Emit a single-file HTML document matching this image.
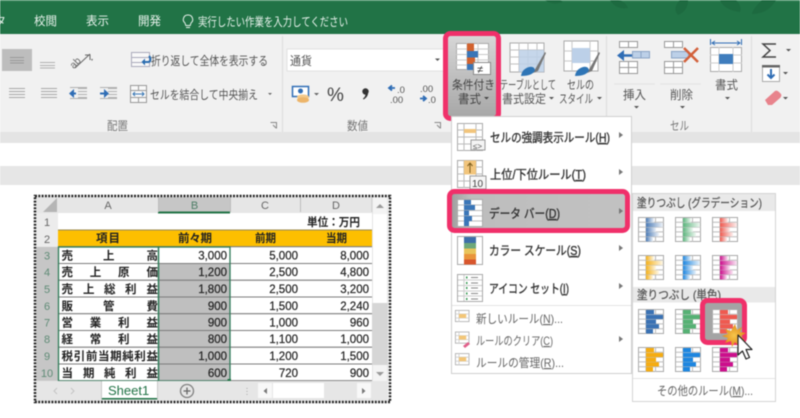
<!DOCTYPE html>
<html lang="ja"><head><meta charset="utf-8">
<style>
html,body{margin:0;padding:0;background:#fff;width:800px;height:418px;overflow:hidden}
svg{display:block;filter:blur(.4px)}
text{font-family:"Liberation Sans","Noto Sans CJK JP",sans-serif;fill:#444;font-size:12px}
.tab{fill:#e8f2ec;font-size:12px}
.rb{fill:#555;font-size:12px}
.gl{fill:#777;font-size:12px}
.m{fill:#333;font-size:12.5px;stroke:#333;stroke-width:.35}
.md{fill:#666;font-size:12px}
.c{fill:#222;font-size:11.5px;font-weight:bold}
.n{fill:#222;font-size:11.5px;text-anchor:end;stroke:#222;stroke-width:.2}
.h{fill:#666;font-size:11px;text-anchor:middle}
.rn{fill:#666;font-size:11px;text-anchor:middle}
.rs{fill:#5f8b76;font-size:11px;text-anchor:middle}
.sh{fill:#555;font-size:12px;stroke:#555;stroke-width:.25}
</style></head><body>
<svg width="800" height="418" viewBox="0 0 800 418" xmlns="http://www.w3.org/2000/svg">
<defs>
<linearGradient id="hl" x1="0" y1="0" x2="0" y2="1"><stop offset="0" stop-color="#d8d8d8"/><stop offset="1" stop-color="#a6a6a6"/></linearGradient>
<linearGradient id="hb" x1="0" y1="0" x2="1" y2="0"><stop offset="0" stop-color="#9c9c9c"/><stop offset=".12" stop-color="#bdbdbd"/><stop offset="1" stop-color="#c2c2c2"/></linearGradient>
<linearGradient id="g1"><stop offset="0" stop-color="#4a7ab5"/><stop offset="1" stop-color="#eef3f9"/></linearGradient>
<linearGradient id="g2"><stop offset="0" stop-color="#5cb57d"/><stop offset="1" stop-color="#eef8f1"/></linearGradient>
<linearGradient id="g3"><stop offset="0" stop-color="#ef5a50"/><stop offset="1" stop-color="#fdeeed"/></linearGradient>
<linearGradient id="g4"><stop offset="0" stop-color="#f5b21c"/><stop offset="1" stop-color="#fef8e8"/></linearGradient>
<linearGradient id="g5"><stop offset="0" stop-color="#1d86e0"/><stop offset="1" stop-color="#e8f3fc"/></linearGradient>
<linearGradient id="g6"><stop offset="0" stop-color="#cc0f8c"/><stop offset="1" stop-color="#fbe8f5"/></linearGradient>
<radialGradient id="sp"><stop offset="0" stop-color="#f7c64c"/><stop offset="1" stop-color="#e08a18"/></radialGradient>
<g id="grid">
<rect x=".5" y=".5" width="25" height="24" fill="#fff" stroke="#aaa"/>
<path d="M.5 5.3H26M.5 10.1H26M.5 14.9H26M.5 19.7H26M8 .5V25M17.500 .5V25" stroke="#bbb" stroke-width="1" fill="none"/>
</g>
<g id="bars">
<rect x="8" y="1" width="8" height="4.300"/><rect x="8" y="5.800" width="17" height="4.300"/><rect x="8" y="10.600" width="10" height="4.300"/><rect x="8" y="15.200" width="13" height="4.300"/><rect x="8" y="20" width="7" height="4.500"/>
</g>
<g id="mi">
<rect x=".5" y=".5" width="17" height="14" fill="#fff" stroke="#aaa"/>
<path d="M.5 5H18M.5 10H18M5 .5V15" stroke="#ccc" fill="none"/>
<rect x="5" y="5" width="9" height="5" fill="#f3c677"/>
</g>
<g id="lines3"><path d="M0 .5H16M0 3.500H16M0 6.500H16M0 9.500H16" stroke="#a8a8a8" stroke-width="1" fill="none"/></g>
<g id="mgrid">
<rect x=".5" y=".5" width="25" height="27" fill="#fff" stroke="#aaa"/>
<path d="M.5 7H26M.5 14H26M.5 21H26M7 .5V28M19 .5V28" stroke="#bbb" fill="none"/>
</g>
</defs>

<!-- title bar -->
<rect width="800" height="34" fill="#217346"/>
<rect width="800" height="1.500" fill="#3f8a60"/>
<g fill="#1d6a40">
<path d="M545 0q8 6 18 2l-3-2zM610 0q6 10 18 8q-3-7-10-8zM680 0q-8 8-2 15q10-4 10-15zM720 0q4 10 20 12q2-6-4-12zM762 0q-10 10-10 14q16 0 24-14z"/>
</g>
<text class="tab" x="-6" y="25">タ</text>
<text class="tab" x="34" y="25" textLength="23" lengthAdjust="spacingAndGlyphs">校閲</text>
<text class="tab" x="86" y="25" textLength="23" lengthAdjust="spacingAndGlyphs">表示</text>
<text class="tab" x="138" y="25" textLength="23" lengthAdjust="spacingAndGlyphs">開発</text>
<path d="M188 15a4.500 4.500 0 0 1 3 8l-.8 2.500h-4.400l-.8-2.500a4.500 4.500 0 0 1 3-8zM186 27.500h4" fill="none" stroke="#e8f2ec" stroke-width="1"/>
<text class="tab" x="198" y="26" textLength="150" lengthAdjust="spacingAndGlyphs">実行したい作業を入力してください</text>

<!-- ribbon -->
<rect y="34" width="800" height="98" fill="#f1f1f1"/>
<rect y="132" width="800" height="11" fill="#e4e4e4"/>
<rect y="143" width="800" height="23" fill="#fff"/>
<rect y="166" width="800" height="19" fill="#e6e6e6"/>
<path d="M282.500 36V132M606.500 36V132M751.500 36V132" stroke="#dcdcdc"/>

<!-- alignment group -->
<rect x="2" y="49" width="30" height="22" fill="#bdbdbd"/>
<path d="M10 57.500H24M10 60.500H24M10 63H24" stroke="#999"/>
<path d="M40 62.500H55M40 65.500H55M40 68H55" stroke="#b0b0b0"/>
<text x="69" y="66" transform="rotate(-45 75 62)" style="font-size:10px;fill:#666">ab</text>
<path d="M75 68L90 54M85 55h5v5" stroke="#666" fill="none"/>
<path d="M91 59l2 0l-1 2z" fill="#666"/>
<rect x="131.500" y="52.500" width="18" height="14" fill="#f8f8f8" stroke="#aab"/>
<path d="M132 57.500H149M132 62.500H142" stroke="#aab"/>
<path d="M149 56c2 2 2 6-1 6h-4" stroke="#2b6db0" stroke-width="2" fill="none"/><path d="M145 58.500l-3.500 3.500l3.500 3.500z" fill="#2b6db0"/>
<text class="rb" x="151" y="65" textLength="117" lengthAdjust="spacingAndGlyphs">折り返して全体を表示する</text>
<use href="#lines3" x="9" y="88"/>
<use href="#lines3" x="41" y="88"/>
<path d="M78 88.500H87M78 91.500H87M78 94.500H87M78 97.500H87M70 87.500H87M70 98.500H87" stroke="#b0b0b0"/>
<path d="M70 93.500h3.500M76 93.500H72" stroke="#2f6db5" stroke-width="2"/><path d="M74 89v9l-5-4.500z" fill="#2f6db5"/>
<path d="M108 88.500H117M108 91.500H117M108 94.500H117M108 97.500H117M100 87.500H117M100 98.500H117" stroke="#b0b0b0"/>
<path d="M100 93.500H105" stroke="#2f6db5" stroke-width="2"/><path d="M104 89v9l5-4.500z" fill="#2f6db5"/>
<rect x="130.500" y="85.500" width="16" height="17" fill="#f8f8f8" stroke="#999"/>
<path d="M130.500 90.500H146M130.500 97.500H146M138.500 85.500V90M138.500 98V102" stroke="#999"/>
<path d="M133 94H144M135 92l-2 2 2 2M142 92l2 2-2 2" stroke="#3a78b5" fill="none"/>
<text class="rb" x="150" y="99" textLength="108" lengthAdjust="spacingAndGlyphs">セルを結合して中央揃え</text>
<path d="M268 93h4l-2 2z" fill="#666"/>
<text class="gl" x="107" y="130" textLength="21" lengthAdjust="spacingAndGlyphs">配置</text>
<path d="M270.500 122.500h6v6M273 125l3 3" stroke="#888" fill="none"/>

<!-- number group -->
<rect x="287" y="49" width="157" height="22" fill="#fff" stroke="#e2e2e2"/>
<text class="rb" x="290" y="65" textLength="22" lengthAdjust="spacingAndGlyphs">通貨</text>
<path d="M435 58.500h5l-2.500 2.500z" fill="#555"/>
<rect x="292.500" y="86.500" width="16" height="10" fill="#fff" stroke="#2f6db5" stroke-width="1.500"/>
<circle cx="300.500" cy="91" r="2.500" fill="#2f6db5"/>
<ellipse cx="303" cy="97" rx="6" ry="2.500" fill="#f3c98b"/><ellipse cx="303" cy="100" rx="6" ry="2.800" fill="#edb56a"/>
<path d="M314 93h5l-2.500 2.500z" fill="#666"/>
<text x="327" y="101" style="font-size:19px;fill:#444">%</text>
<circle cx="365.500" cy="91.500" r="3.200" fill="#333"/>
<path d="M368 92c.5 3-1.500 6-4.500 7.500l-.5-1c1.500-1 2.500-2.500 2.500-4.500z" fill="#333"/>
<path d="M389 88h6M392 85.500l-3 2.500 3 2.500" stroke="#2f6db5" stroke-width="1.800" fill="none"/>
<text x="397" y="93" style="font-size:9.500px;fill:#555">.0</text>
<text x="390" y="103" style="font-size:9.500px;fill:#555">.00</text>
<text x="420" y="92" style="font-size:9.500px;fill:#555">.00</text>
<path d="M420 98.500h6M423 96l3 2.500-3 2.500" stroke="#2f6db5" stroke-width="1.800" fill="none"/>
<text x="428" y="103" style="font-size:9.500px;fill:#555">.0</text>
<text class="gl" x="347" y="130" textLength="21" lengthAdjust="spacingAndGlyphs">数値</text>
<path d="M434.500 122.500h6v6M437 125l3 3" stroke="#888" fill="none"/>

<!-- table format -->
<rect x="510" y="43" width="34" height="29" fill="#fff" stroke="#aaa"/>
<path d="M510 50H544M510 57H544M510 64H544M519 43V72M528 43V72M537 43V72" stroke="#c0c0c0"/>
<rect x="519" y="50" width="25" height="22" fill="#bcd0e8" opacity=".85"/>
<path d="M533 73L545 52l1 1-8 18z" fill="#777"/>
<path d="M521 76q1-7 8-9q5-1 6 3q-2 6-14 6z" fill="#2e75b6"/>
<text class="rb" x="500" y="89" textLength="56" lengthAdjust="spacingAndGlyphs">テーブルとして</text>
<text class="rb" x="502" y="103" textLength="44" lengthAdjust="spacingAndGlyphs">書式設定</text>
<path d="M549 97h5l-2.500 2.500z" fill="#555"/>
<!-- cell styles -->
<rect x="564" y="41" width="34" height="30" fill="#fff" stroke="#aaa"/>
<path d="M564 51H598M564 61H598M572 41V71M590 41V71" stroke="#c8c8c8"/>
<rect x="572" y="48" width="18" height="15" fill="#bcd0e8"/>
<path d="M587 73L599 52l1 1-8 18z" fill="#777"/>
<path d="M575 76q1-7 8-9q5-1 6 3q-2 6-14 6z" fill="#2e75b6"/>
<text class="rb" x="567" y="89" textLength="27" lengthAdjust="spacingAndGlyphs">セルの</text>
<text class="rb" x="559" y="103" textLength="34" lengthAdjust="spacingAndGlyphs">スタイル</text>
<path d="M597 97h5l-2.500 2.500z" fill="#555"/>

<!-- cells group -->
<rect x="619.500" y="41.500" width="18" height="6" fill="#fff" stroke="#999"/>
<path d="M628.500 41.500v6" stroke="#999"/>
<rect x="632.500" y="51.500" width="17" height="6.500" fill="#bcd0e8" stroke="#8aa4c4"/>
<path d="M641 51.500v7" stroke="#8aa4c4"/>
<path d="M620 55.500H632" stroke="#2f6db5" stroke-width="2.500"/><path d="M624 50l-7 5.500 7 5.500z" fill="#2f6db5"/>
<rect x="619.500" y="61.500" width="18" height="12" fill="#fff" stroke="#999"/>
<path d="M619.500 67.500H637M628.500 61.500V74" stroke="#999"/>
<path d="M614 84H655" stroke="#e2e2e2"/>
<text class="rb" x="623" y="99" textLength="23" lengthAdjust="spacingAndGlyphs">挿入</text>
<path d="M634 106h5l-2.500 2.500z" fill="#555"/>
<rect x="664.500" y="41.500" width="18" height="6" fill="#fff" stroke="#999"/>
<path d="M673.500 41.500v6" stroke="#999"/>
<rect x="671.500" y="51.500" width="17" height="6.500" fill="#bcd0e8" stroke="#8aa4c4"/>
<path d="M684 48L698 62M698 48L684 62" stroke="#d2603a" stroke-width="2.500"/>
<rect x="664.500" y="61.500" width="18" height="12" fill="#fff" stroke="#999"/>
<path d="M664.500 67.500H682M673.500 61.500V74" stroke="#999"/>
<path d="M660 84H701" stroke="#e2e2e2"/>
<text class="rb" x="670" y="99" textLength="23" lengthAdjust="spacingAndGlyphs">削除</text>
<path d="M680 106h5l-2.500 2.500z" fill="#555"/>
<path d="M712 43H740M715 41l-3 2 3 2M737 41l3 2-3 2M710.500 39v6M741.500 39v6" stroke="#2f6db5" fill="none"/>
<rect x="710.500" y="47.500" width="31" height="24" fill="#fff" stroke="#aaa"/>
<path d="M710 55H742M710 63H742M719 47V72M733 47V72" stroke="#ccc"/>
<rect x="719" y="54" width="14" height="10" fill="#3f7dbd"/>
<text class="rb" x="715" y="89" textLength="23" lengthAdjust="spacingAndGlyphs">書式</text>
<path d="M725 97h5l-2.500 2.500z" fill="#555"/>
<text class="gl" x="670" y="130" textLength="19" lengthAdjust="spacingAndGlyphs">セル</text>

<!-- editing group -->
<path d="M776 44H763L770 50.500 763 57H776" fill="none" stroke="#444" stroke-width="1.500"/>
<path d="M786 49h5l-2.500 2.500z" fill="#555"/>
<rect x="762.500" y="65.500" width="17" height="16" fill="#fff" stroke="#aaa"/>
<rect x="762" y="65" width="18" height="2.500" fill="#666"/>
<path d="M771 69V78M767.500 74.500L771 78l3.500-3.500" stroke="#2f6db5" stroke-width="2" fill="none"/>
<path d="M783 72h5l-2.500 2.500z" fill="#555"/>
<path d="M765 100l10-9q2-1 4 1l2 2q1 2-1 4l-8 7h-4z" fill="#e8838c"/>
<path d="M783 97h5l-2.500 2.500z" fill="#555"/>

<!-- spreadsheet -->
<rect x="36" y="196" width="352" height="205" fill="#e6e6e6"/>
<rect x="58" y="213" width="314" height="168" fill="#fff"/>
<rect x="36" y="196" width="22" height="17" fill="#e6e6e6"/>
<path d="M43 212H57V198z" fill="#b5b5b5"/>
<rect x="58" y="196" width="100" height="17" fill="#e6e6e6"/>
<rect x="158" y="196" width="72" height="17" fill="#c6c6c6"/>
<rect x="158" y="211.500" width="72" height="2" fill="#217346"/>
<path d="M158.500 197V212M230.500 197V212M300.500 197V212M372 197V212" stroke="#bdbdbd"/>
<text class="h" x="108" y="209">A</text><text class="h" x="194.500" y="209" style="fill:#4d7d66">B</text><text class="h" x="265" y="209">C</text><text class="h" x="336" y="209">D</text>
<rect x="36" y="246.800" width="22" height="134" fill="#c6c6c6"/>
<rect x="36" y="213" width="22" height="33.800" fill="#ececec"/>
<text class="rn" x="47" y="226">1</text><text class="rn" x="47" y="243">2</text>
<text class="rs" x="47" y="259.500">3</text><text class="rs" x="47" y="276">4</text><text class="rs" x="47" y="293">5</text><text class="rs" x="47" y="310">6</text><text class="rs" x="47" y="326.500">7</text><text class="rs" x="47" y="343">8</text><text class="rs" x="47" y="360">9</text><text class="rs" x="47" y="377">10</text>
<rect x="58" y="230" width="314" height="16.800" fill="#fdbf00"/>
<rect x="158" y="263.500" width="72" height="117" fill="#bfbfbf"/>
<path d="M58 230H372M58 246.700H372M58 263.500H372M58 280.200H372M58 297H372M58 313.700H372M58 330.500H372M58 347.200H372M58 364H372M58 380.700H372" stroke="#7c7c7c" stroke-width="1.100"/>
<path d="M58 230H372" stroke="#9a8a50"/>
<rect x="58.500" y="247" width="100" height="134" fill="none" stroke="#2e7a57" stroke-width="1.300"/>
<rect x="158.500" y="247" width="71.500" height="134" fill="none" stroke="#2e7a57" stroke-width="1.300"/>
<rect x="227.500" y="379" width="3.500" height="3.500" fill="#217346"/>

<text class="c" x="96" y="242" textLength="24">項目</text>
<text class="c" x="178" y="242" textLength="34">前々期</text>
<text class="c" x="255" y="242" textLength="21" lengthAdjust="spacingAndGlyphs">前期</text>
<text class="c" x="326" y="242" textLength="21" lengthAdjust="spacingAndGlyphs">当期</text>
<text class="c" x="307" y="226" textLength="53" lengthAdjust="spacingAndGlyphs">単位：万円</text>
<text class="c" x="61.500 103 146.500" y="259.500">売上高</text>
<text class="c" x="61.500 89.800 118 146.500" y="276">売上原価</text>
<text class="c" x="61.500 83 104 125 146.500" y="293">売上総利益</text>
<text class="c" x="61.500 103 146.500" y="310">販管費</text>
<text class="c" x="61.500 89.800 118 146.500" y="326.500">営業利益</text>
<text class="c" x="61.500 89.800 118 146.500" y="343">経常利益</text>
<text class="c" x="61.500 73.800 85.900 98 110.100 122.200 134.300 146.500" y="360">税引前当期純利益</text>
<text class="c" x="61.500 83 104 125 146.500" y="377">当期純利益</text>

<text class="n" x="227" y="259.500">3,000</text><text class="n" x="298" y="259.500">5,000</text><text class="n" x="369" y="259.500">8,000</text>
<text class="n" x="227" y="276">1,200</text><text class="n" x="298" y="276">2,500</text><text class="n" x="369" y="276">4,800</text>
<text class="n" x="227" y="293">1,800</text><text class="n" x="298" y="293">2,500</text><text class="n" x="369" y="293">3,200</text>
<text class="n" x="227" y="310">900</text><text class="n" x="298" y="310">1,500</text><text class="n" x="369" y="310">2,240</text>
<text class="n" x="227" y="326.500">900</text><text class="n" x="298" y="326.500">1,000</text><text class="n" x="369" y="326.500">960</text>
<text class="n" x="227" y="343">800</text><text class="n" x="298" y="343">1,100</text><text class="n" x="369" y="343">1,000</text>
<text class="n" x="227" y="360">1,000</text><text class="n" x="298" y="360">1,200</text><text class="n" x="369" y="360">1,500</text>
<text class="n" x="227" y="377">600</text><text class="n" x="298" y="377">720</text><text class="n" x="369" y="377">900</text>

<!-- v scrollbar -->
<rect x="372" y="196" width="16" height="185" fill="#e4e4e4"/>
<rect x="373" y="197" width="14" height="17" fill="#f4f4f4"/>
<rect x="373" y="214" width="14" height="89" fill="#fff"/>
<path d="M376 208h8l-4-4z" fill="#9a9a9a"/>
<rect x="373" y="365" width="14" height="17" fill="#f4f4f4"/>
<path d="M376 372h8l-4 4z" fill="#9a9a9a"/>
<rect x="372" y="303" width="16" height="62" fill="#d6d6d6"/>

<!-- sheet tabs -->
<rect x="36" y="381" width="352" height="20" fill="#e6e6e6"/>
<path d="M57 388l-3 3 3 3M71 388l3 3-3 3" stroke="#c4c4c4" fill="none"/>
<rect x="101.500" y="381" width="56" height="18" fill="#fff"/>
<rect x="101.500" y="398" width="56" height="1.500" fill="#217346"/>
<path d="M101.500 381V399M157.500 381V399" stroke="#c8c8c8"/>
<text x="108" y="395" style="font-size:13px;fill:#217346">Sheet1</text>
<circle cx="187" cy="391" r="6.500" fill="none" stroke="#808080" stroke-width="1.300"/>
<path d="M187 387.500v7M183.500 391h7" stroke="#666" stroke-width="1.300"/>
<path d="M247 388v.8M247 391v.8M247 394v.8" stroke="#999"/>
<rect x="258" y="383" width="14" height="15" fill="#f8f8f8"/>
<path d="M267 388v6l-3.500-3z" fill="#777"/>
<rect x="273" y="383" width="51" height="15" fill="#fff"/>
<rect x="357" y="383" width="14" height="15" fill="#f8f8f8"/>
<path d="M362 388v6l3.500-3z" fill="#777"/>

<!-- marching ants -->
<rect x="35" y="196" width="355" height="206" fill="none" stroke="#fff" stroke-width="2.500"/>
<rect x="35" y="196" width="355" height="206" fill="none" stroke="#222" stroke-width="2.500" stroke-dasharray="2 1.300"/>

<!-- highlight 1: conditional format -->
<rect x="445.500" y="33.500" width="53" height="85" rx="5" fill="url(#hl)"/>
<rect x="456.500" y="43.500" width="32" height="26" fill="#fff" stroke="#aaa"/>
<path d="M456 49H489M456 54.500H489M456 60H489M456 65H489M467 43V70M478 43V70" stroke="#c8c8c8"/>
<rect x="467" y="43.500" width="7" height="8" fill="#d2622e"/>
<rect x="467" y="51" width="11" height="6.500" fill="#3a76b8"/>
<rect x="467" y="57.500" width="8" height="6.500" fill="#d2622e"/>
<rect x="467" y="64" width="6" height="6" fill="#3a76b8"/>
<rect x="473.500" y="62.500" width="17" height="12" fill="#fff" stroke="#888"/>
<text x="477" y="73" style="font-size:11px;fill:#333">≠</text>
<text class="rb" x="452" y="89" textLength="43" lengthAdjust="spacingAndGlyphs" style="fill:#444">条件付き</text>
<text class="rb" x="458" y="103" textLength="23" lengthAdjust="spacingAndGlyphs" style="fill:#444">書式</text>
<path d="M484 97h5l-2.500 2.500z" fill="#444"/>
<rect x="445.500" y="33.500" width="53" height="85" rx="5" fill="none" stroke="#f0306a" stroke-width="5"/>

<!-- main menu -->
<rect x="451.500" y="116.500" width="180" height="257" fill="#fff" stroke="#cfcfcf"/>
<use href="#mgrid" x="457" y="123"/>
<rect x="464" y="129" width="12" height="4" fill="#f2c57c"/>
<rect x="471" y="140" width="14" height="10" fill="#f4f4f4" stroke="#999"/>
<text x="473" y="149" style="font-size:8px;fill:#555">≤&gt;</text>
<text class="m" x="490" y="142" textLength="120" lengthAdjust="spacingAndGlyphs">セルの強調表示ルール(<tspan text-decoration="underline">H</tspan>)</text>
<path d="M619 132v6l4-3z" fill="#777"/>
<use href="#mgrid" x="457" y="160"/>
<rect x="464" y="160.500" width="12" height="14" fill="#f2c57c"/>
<path d="M470 173V163M467.500 166l2.500-3 2.500 3" stroke="#7b5c1d" fill="none"/>
<rect x="470" y="176" width="16" height="13" fill="#f6f6f6" stroke="#999"/>
<text x="472" y="187" style="font-size:10px;fill:#444">10</text>
<text class="m" x="490" y="179" textLength="96" lengthAdjust="spacingAndGlyphs">上位/下位ルール(<tspan text-decoration="underline">T</tspan>)</text>
<path d="M619 169v6l4-3z" fill="#777"/>
<!-- data bar highlight -->
<rect x="449.500" y="191.500" width="178" height="39" rx="5" fill="url(#hb)"/>
<rect x="457.500" y="199.500" width="25" height="27" fill="#fff" stroke="#aaa"/>
<path d="M458 205H482M458 210.500H482M458 216H482M458 221H482" stroke="#bbb"/>
<rect x="464" y="200" width="7" height="4.500" fill="#3a76b8"/><rect x="464" y="205" width="11" height="5" fill="#3a76b8"/><rect x="464" y="210.500" width="5" height="5" fill="#3a76b8"/><rect x="464" y="216" width="8" height="5" fill="#3a76b8"/><rect x="464" y="221" width="5" height="5" fill="#3a76b8"/>
<text class="m" x="489" y="218" textLength="71" lengthAdjust="spacingAndGlyphs">データ バー(<tspan text-decoration="underline">D</tspan>)</text>
<path d="M619 208v6l4-3z" fill="#777"/>
<rect x="449.500" y="191.500" width="178" height="39" rx="5" fill="none" stroke="#f0306a" stroke-width="5"/>
<!-- colour scale -->
<rect x="457.500" y="236.500" width="25" height="28" fill="#fff" stroke="#aaa"/>
<rect x="464" y="237" width="12" height="6" fill="#3d6fa8"/><rect x="464" y="243" width="12" height="5.500" fill="#6da87a"/><rect x="464" y="248.500" width="12" height="5.500" fill="#e8c45a"/><rect x="464" y="254" width="12" height="5.500" fill="#e9943a"/><rect x="464" y="259.500" width="12" height="5" fill="#d8562e"/>
<text class="m" x="489" y="255" textLength="92" lengthAdjust="spacingAndGlyphs">カラー スケール(<tspan text-decoration="underline">S</tspan>)</text>
<path d="M619 245v6l4-3z" fill="#777"/>
<!-- icon set -->
<rect x="457.500" y="274.500" width="25" height="27" fill="#fff" stroke="#aaa"/>
<path d="M458 280H482M458 285.500H482M458 291H482M458 296H482M464 275V301" stroke="#ccc"/>
<path d="M466 277.500h1.500M466 283h1.500M466 288h1.500M466 293.500h1.500M466 299h1.500" stroke="#3a9a55" stroke-width="2"/>
<path d="M471 277.500h7M471 283h7M471 288h7M471 293.500h7M471 299h7" stroke="#888"/>
<text class="m" x="489" y="293" textLength="80" lengthAdjust="spacingAndGlyphs">アイコン セット(<tspan text-decoration="underline">I</tspan>)</text>
<path d="M619 283v6l4-3z" fill="#777"/>
<path d="M452 305.500H631" stroke="#e4e4e4"/>
<use href="#mi" x="455" y="310" transform="translate(91 62) scale(.8)"/>
<text class="md" x="476" y="323" textLength="87" lengthAdjust="spacingAndGlyphs">新しいルール(<tspan text-decoration="underline">N</tspan>)...</text>
<use href="#mi" x="455" y="332" transform="translate(91 66) scale(.8)"/>
<path d="M463 346l5-4 2 2-5 4z" fill="#e0608a"/>
<text class="md" x="476" y="345" textLength="77" lengthAdjust="spacingAndGlyphs">ルールのクリア(<tspan text-decoration="underline">C</tspan>)</text>
<path d="M619 336v6l4-3z" fill="#777"/>
<use href="#mi" x="455" y="354" transform="translate(91 70) scale(.8)"/>
<text class="md" x="476" y="367" textLength="88" lengthAdjust="spacingAndGlyphs">ルールの管理(<tspan text-decoration="underline">R</tspan>)...</text>

<!-- submenu -->
<rect x="632.500" y="193.500" width="143" height="208" fill="#fff" stroke="#d4d4d4"/>
<rect x="633" y="194" width="142" height="17" fill="#e9e9e9"/>
<rect x="633" y="287" width="142" height="15.500" fill="#e9e9e9"/>
<text class="sh" x="637" y="207" textLength="125" lengthAdjust="spacingAndGlyphs">塗りつぶし (グラデーション)</text>
<text class="sh" x="637" y="299" textLength="84" lengthAdjust="spacingAndGlyphs">塗りつぶし (単色)</text>
<use href="#grid" x="638" y="217"/><use href="#bars" x="638" y="217" fill="url(#g1)"/>
<use href="#grid" x="675" y="217"/><use href="#bars" x="675" y="217" fill="url(#g2)"/>
<use href="#grid" x="712" y="217"/><use href="#bars" x="712" y="217" fill="url(#g3)"/>
<use href="#grid" x="638" y="255"/><use href="#bars" x="638" y="255" fill="url(#g4)"/>
<use href="#grid" x="675" y="255"/><use href="#bars" x="675" y="255" fill="url(#g5)"/>
<use href="#grid" x="712" y="255"/><use href="#bars" x="712" y="255" fill="url(#g6)"/>
<use href="#grid" x="638" y="309"/><use href="#bars" x="638" y="309" fill="#3a72b4"/>
<use href="#grid" x="675" y="309"/><use href="#bars" x="675" y="309" fill="#56b174"/>
<rect x="703" y="301" width="41" height="41" fill="#a4a4a4"/>
<use href="#grid" x="712" y="309"/><use href="#bars" x="712" y="309" fill="#ef5a50"/>
<use href="#grid" x="638" y="347"/><use href="#bars" x="638" y="347" fill="#f5ac12"/>
<use href="#grid" x="675" y="347"/><use href="#bars" x="675" y="347" fill="#1d86e0"/>
<use href="#grid" x="712" y="347"/><use href="#bars" x="712" y="347" fill="#cc0f8c"/>
<rect x="702.500" y="300.500" width="42" height="42" rx="5" fill="none" stroke="#f0306a" stroke-width="5"/>
<path d="M633 378.500H775" stroke="#e4e4e4"/>
<text class="md" x="657" y="395" textLength="96" lengthAdjust="spacingAndGlyphs">その他のルール(<tspan text-decoration="underline">M</tspan>)...</text>

<!-- click spark -->
<path d="M735 324l2 6 5-3-2 5 6 1-5 3 4 5-6-1 0 6-4-4-3 5-1-6-6 2 3-5-6-2 6-2-3-5 6 2z" fill="url(#sp)"/>
<!-- cursor -->
<path d="M738 335V355L742.500 351 746 359 749.500 357.500 746 349.500 752 349.500z" fill="#fff" stroke="#222" stroke-width="1.200" stroke-linejoin="round"/>
</svg>
</body></html>
